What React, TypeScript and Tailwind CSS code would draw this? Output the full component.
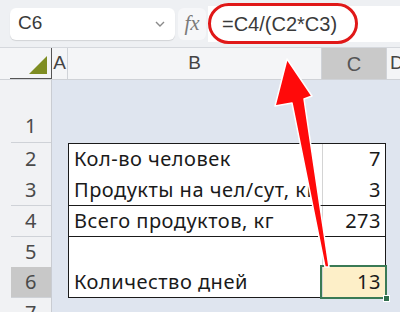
import React from 'react';

const cellFont = { fontFamily: '"Noto Sans", "Open Sans", sans-serif', letterSpacing: '0.5px' };
const uiFont = { fontFamily: '"Liberation Sans", Arial, sans-serif' };

type Row = { n: string; h: string; b?: string; c?: string; table?: boolean; top?: boolean; sel?: boolean };

const rows: Row[] = [
  { n: '1', h: 'h-[63px]' },
  { n: '2', h: 'h-[31px]', b: 'Кол-во человек', c: '7', table: true, top: true },
  { n: '3', h: 'h-[32px]', b: 'Продукты на чел/сут, кг', c: '3', table: true },
  { n: '4', h: 'h-[31px]', b: 'Всего продуктов, кг', c: '273', table: true },
  { n: '5', h: 'h-[30px]', b: '', c: '', table: true },
  { n: '6', h: 'h-[31px]', b: 'Количество дней', c: '13', table: true, sel: true },
  { n: '7', h: 'h-[20px]' },
];

function SheetRow({ r }: { r: Row }) {
  return (
    <div className={`grid grid-cols-[52px_16px_254px_64px_14px] ${r.h}`}>
      <div className="bg-[#f1f2f4] border-r border-[#c9ccd2] flex">
        <div
          className={`ml-[11px] flex-1 flex justify-center text-[20px] text-[#4a4a4a] border-b border-[#cfd2d7] ${
            r.sel ? 'bg-[#c8c8c8]' : ''
          } ${r.n === '1' ? 'items-end pb-[1px]' : 'items-center'}`}
          style={cellFont}
        >
          {r.n}
        </div>
      </div>
      <div className="bg-[#dfe5ef]" />
      {r.table ? (
        <>
          <div
            className={`bg-white border-l-[1.5px] border-b-[1.5px] border-[#1a1a1a] ${r.top ? 'border-t-[1.5px]' : ''} overflow-hidden whitespace-nowrap flex items-center pl-[5px] text-[20px] text-[#1a1a1a]`}
            style={cellFont}
          >
            {r.b}
          </div>
          <div
            className={`relative border-r-[1.5px] border-b-[1.5px] border-[#1a1a1a] ${r.top ? 'border-t-[1.5px]' : ''} ${
              r.sel ? 'bg-[#fdefc8]' : 'bg-white'
            } flex items-center justify-end pr-[4px] text-[20px] text-[#1a1a1a]`}
            style={cellFont}
          >
            <div className="absolute left-0 top-0 bottom-0 w-px bg-[#d4d4d4]" />
            {r.sel && (
              <>
                <div className="absolute -left-[2px] -top-[2px] -right-[2px] -bottom-[2px] border-2 border-[#3a7a55]" />
                <div className="absolute -right-[5px] -bottom-[5px] w-[7px] h-[7px] bg-[#2f6e4c] border border-white" />
              </>
            )}
            <span className="relative">{r.c}</span>
          </div>
        </>
      ) : (
        <>
          <div className="bg-[#dfe5ef]" />
          <div className="bg-[#dfe5ef]" />
        </>
      )}
      <div className="bg-[#dfe5ef]" />
    </div>
  );
}

export default function App() {
  return (
    <div className="relative w-[400px] h-[312px] overflow-hidden bg-[#eef0f3]">
      {/* toolbar */}
      <div className="h-[48px] flex items-center border-b border-[#d5d8dd]">
        <div className="ml-[10px] w-[165px] h-[32px] bg-white rounded-md shadow-[0_1px_1px_rgba(0,0,0,0.12)] flex items-center justify-between pl-[8px] pr-[10px]">
          <span className="text-[19px] text-[#3a3a3a]" style={uiFont}>
            C6
          </span>
          <svg width="10" height="6" viewBox="0 0 10 6">
            <path d="M1 1 L5 5 L9 1" fill="none" stroke="#8a8a8a" strokeWidth="1.4" />
          </svg>
        </div>
        <div className="ml-[3px] w-[28px] h-[32px] rounded-md bg-[#f6f7f9] flex items-center justify-center">
          <span className="italic text-[21px] text-[#7a7a7a] leading-none" style={{ fontFamily: '"Liberation Serif", serif' }}>
            fx
          </span>
        </div>
        <div className="ml-[2px] flex-1 h-[36px] bg-white flex items-center pl-[14px]">
          <span className="text-[20px] text-[#3a3a3a]" style={uiFont}>
            =C4/(C2*C3)
          </span>
        </div>
      </div>

      {/* column headers */}
      <div className="grid grid-cols-[52px_16px_254px_64px_14px] h-[32px] bg-[#f4f5f7] border-b border-[#cfd2d7]">
        <div className="relative border-r-[1.5px] border-[#555]">
          <div className="absolute left-[10px] right-0 bottom-0 h-[1.5px] bg-[#555]" />
          <svg className="absolute left-[29px] top-[8px]" width="19" height="19" viewBox="0 0 19 19">
            <path d="M0 18 L18 18 L18 0 Z" fill="#7e8d23" />
          </svg>
        </div>
        <div className="flex items-center justify-center border-r border-[#d0d3d8] text-[19px] text-[#444]" style={uiFont}>
          A
        </div>
        <div className="flex items-center justify-center border-r border-[#d0d3d8] text-[19px] text-[#444]" style={uiFont}>
          B
        </div>
        <div className="flex items-center justify-center bg-[#c9c9c9] text-[20px] text-[#555]" style={uiFont}>
          C
        </div>
        <div className="flex items-center pl-[3px] border-l border-[#d0d3d8] text-[19px] text-[#444]" style={uiFont}>
          D
        </div>
      </div>

      {rows.map((r) => (
        <SheetRow key={r.n} r={r} />
      ))}

      {/* red annotation oval */}
      <div className="absolute left-[208px] top-[3px] w-[150px] h-[41px] rounded-[21px] border-[3px] border-[#e01818]" />

      {/* red arrow */}
      <svg className="absolute left-0 top-0 pointer-events-none" width="400" height="312" viewBox="0 0 400 312">
        <polygon
          points="287,59 312,96 304,99 329,267 325,267 292,103 275,106"
          fill="#ff0a0a"
          stroke="#ffffff"
          strokeWidth="1.5"
          strokeLinejoin="round"
        />
      </svg>
    </div>
  );
}
